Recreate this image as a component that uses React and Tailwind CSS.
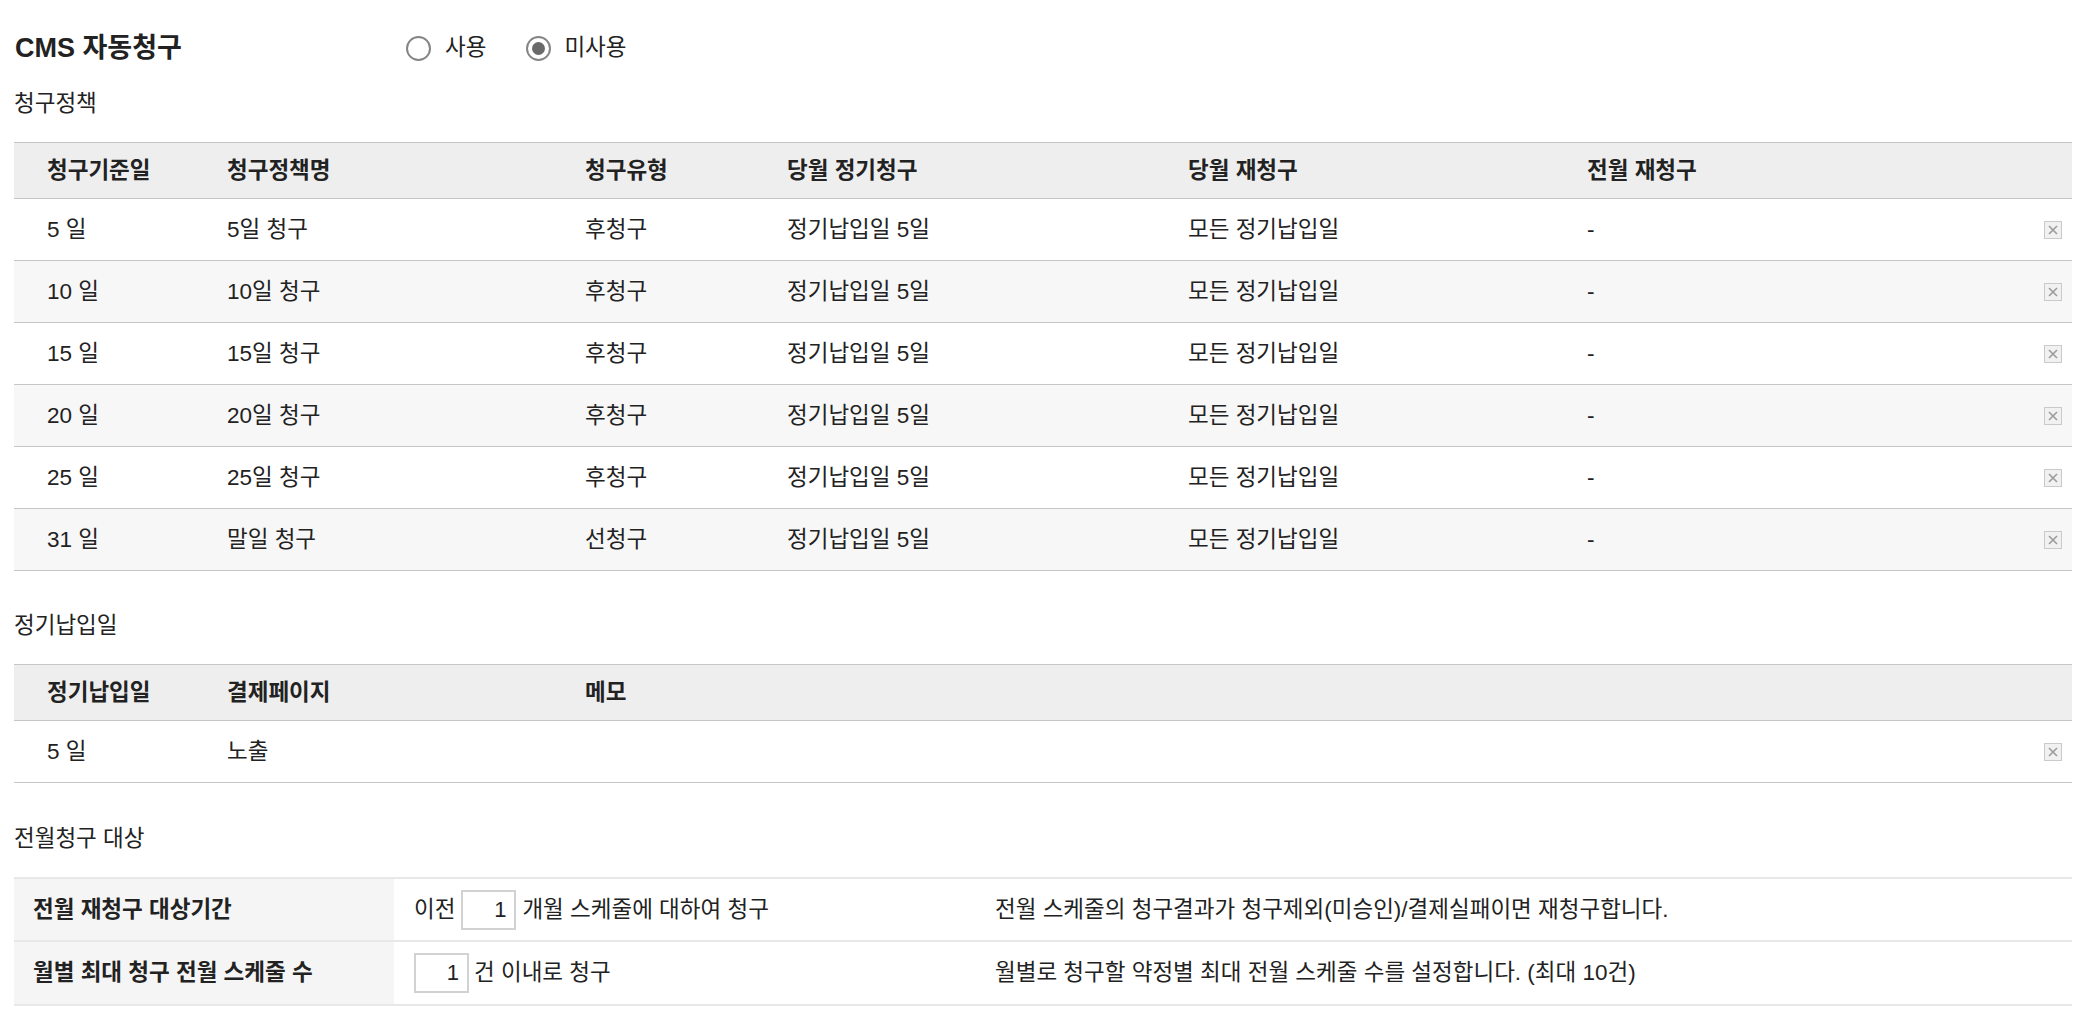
import React from "react";

const policies = [
  ["5 일", "5일 청구", "후청구"],
  ["10 일", "10일 청구", "후청구"],
  ["15 일", "15일 청구", "후청구"],
  ["20 일", "20일 청구", "후청구"],
  ["25 일", "25일 청구", "후청구"],
  ["31 일", "말일 청구", "선청구"],
];

const cols = "grid grid-cols-[213px_358px_202px_401px_399px_1fr]";

function Radio({ checked }) {
  return (
    <span className="w-[25px] h-[25px] rounded-full border-2 border-[#858585] bg-white flex items-center justify-center">
      {checked && <span className="w-[13px] h-[13px] rounded-full bg-[#6a6a6a]" />}
    </span>
  );
}

function DeleteIcon() {
  return (
    <svg width="18" height="18" viewBox="0 0 18 18">
      <rect x="0.5" y="0.5" width="17" height="17" fill="#f1f1f1" stroke="#cacaca" />
      <path d="M5 5L13 13M13 5L5 13" stroke="#9b9b9b" strokeWidth="1.6" />
    </svg>
  );
}

function SectionLabel({ children, className }) {
  return <div className={`h-10 flex items-center text-[22.5px] ${className}`}>{children}</div>;
}

function NumBox() {
  return (
    <input
      readOnly
      value="1"
      className="w-[55px] h-[40px] border-2 border-[#d2d2d2] bg-white text-right pr-2 text-[22px] text-[#222] outline-none"
    />
  );
}

export default function App() {
  return (
    <div className="min-h-screen bg-white text-[#222] pt-4 pl-[14px] pr-[22px] font-['Liberation_Sans','Noto_Sans_CJK_KR',sans-serif]">
      {/* title + use toggle */}
      <div className="h-16 flex items-center">
        <h1 className="text-[27px] font-bold w-[392px] pl-[1px]">CMS 자동청구</h1>
        <label className="flex items-center gap-[14px] text-[22.5px]">
          <Radio /> 사용
        </label>
        <label className="flex items-center gap-[13px] text-[22.5px] ml-[40px]">
          <Radio checked /> 미사용
        </label>
      </div>

      <SectionLabel className="mt-1">청구정책</SectionLabel>

      <div className="mt-[18px] text-[22.5px]">
        <div className={`${cols} h-[57px] items-center bg-[#eeeeee] border-y border-[#c6c6c6] font-bold`}>
          <div className="pl-[33px]">청구기준일</div>
          <div>청구정책명</div>
          <div>청구유형</div>
          <div>당월 정기청구</div>
          <div>당월 재청구</div>
          <div>전월 재청구</div>
        </div>
        {policies.map((p, i) => (
          <div
            key={p[0]}
            className={`${cols} h-[62px] items-center border-b border-[#c6c6c6] ${i % 2 ? "bg-[#f7f7f7]" : "bg-white"}`}
          >
            <div className="pl-[33px]">{p[0]}</div>
            <div>{p[1]}</div>
            <div>{p[2]}</div>
            <div>정기납입일 5일</div>
            <div>모든 정기납입일</div>
            <div className="flex items-center justify-between pr-[10px]">
              <span>-</span>
              <DeleteIcon />
            </div>
          </div>
        ))}
      </div>

      <SectionLabel className="mt-[35px]">정기납입일</SectionLabel>

      <div className="mt-[18px] text-[22.5px]">
        <div className="grid grid-cols-[213px_358px_1fr] h-[57px] items-center bg-[#eeeeee] border-y border-[#c6c6c6] font-bold">
          <div className="pl-[33px]">정기납입일</div>
          <div>결제페이지</div>
          <div>메모</div>
        </div>
        <div className="grid grid-cols-[213px_358px_1fr] h-[62px] items-center border-b border-[#c6c6c6]">
          <div className="pl-[33px]">5 일</div>
          <div>노출</div>
          <div className="flex justify-end pr-[10px]">
            <DeleteIcon />
          </div>
        </div>
      </div>

      <SectionLabel className="mt-9">전월청구 대상</SectionLabel>

      <div className="mt-[18px] text-[22.5px] border-t-2 border-[#e8e8e8]">
        <div className="grid grid-cols-[380px_601px_1fr] h-[63px] border-b-2 border-[#e8e8e8]">
          <div className="bg-[#f5f5f5] pl-[19px] flex items-center font-bold">전월 재청구 대상기간</div>
          <div className="pl-5 flex items-center gap-[6px]">
            <span>이전</span>
            <NumBox />
            <span>개월 스케줄에 대하여 청구</span>
          </div>
          <div className="flex items-center">
            전월 스케줄의 청구결과가 청구제외(미승인)/결제실패이면 재청구합니다.
          </div>
        </div>
        <div className="grid grid-cols-[380px_601px_1fr] h-[64px] border-b-2 border-[#e8e8e8]">
          <div className="bg-[#f5f5f5] pl-[19px] flex items-center font-bold">월별 최대 청구 전월 스케줄 수</div>
          <div className="pl-5 flex items-center gap-[5px]">
            <NumBox />
            <span>건 이내로 청구</span>
          </div>
          <div className="flex items-center">
            월별로 청구할 약정별 최대 전월 스케줄 수를 설정합니다. (최대 10건)
          </div>
        </div>
      </div>
    </div>
  );
}
